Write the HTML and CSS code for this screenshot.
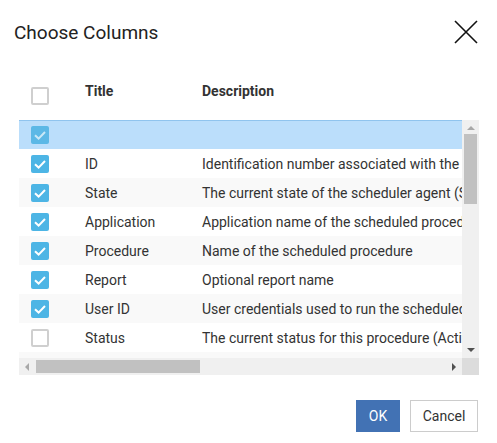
FILE: index.html
```html
<!DOCTYPE html>
<html>
<head>
<meta charset="utf-8">
<link rel="stylesheet" href="styles.css">
</head>
<body>
<div class="dialog">
  <div class="dlg-head">
    <div class="dlg-title">Choose Columns</div>
    <svg class="close" width="24" height="24" viewBox="0 0 24 24"><path d="M1 1 L23 23 M23 1 L1 23" stroke="#111" stroke-width="1.6" fill="none"/></svg>
  </div>
  <div class="grid">
    <div class="grid-head">
      <div class="cell-cb"><span class="cb"></span></div>
      <div class="hcell">Title</div>
      <div class="hcell">Description</div>
    </div>
    <div class="grid-body">
      <div class="viewport">
        <div class="rows">
          <div class="row sel"><div class="cell-cb"><span class="cb on"><svg viewBox="0 0 18 18"><path d="M4 9.2 L7.6 12.6 L14 6" /></svg></span></div><div class="c-title"></div><div class="c-desc"></div></div>
          <div class="row"><div class="cell-cb"><span class="cb on"><svg viewBox="0 0 18 18"><path d="M4 9.2 L7.6 12.6 L14 6" /></svg></span></div><div class="c-title">ID</div><div class="c-desc">Identification number associated with the scheduled procedure</div></div>
          <div class="row alt"><div class="cell-cb"><span class="cb on"><svg viewBox="0 0 18 18"><path d="M4 9.2 L7.6 12.6 L14 6" /></svg></span></div><div class="c-title">State</div><div class="c-desc">The current state of the scheduler agent (Started/Stopped)</div></div>
          <div class="row"><div class="cell-cb"><span class="cb on"><svg viewBox="0 0 18 18"><path d="M4 9.2 L7.6 12.6 L14 6" /></svg></span></div><div class="c-title">Application</div><div class="c-desc">Application name of the scheduled procedure</div></div>
          <div class="row alt"><div class="cell-cb"><span class="cb on"><svg viewBox="0 0 18 18"><path d="M4 9.2 L7.6 12.6 L14 6" /></svg></span></div><div class="c-title">Procedure</div><div class="c-desc">Name of the scheduled procedure</div></div>
          <div class="row"><div class="cell-cb"><span class="cb on"><svg viewBox="0 0 18 18"><path d="M4 9.2 L7.6 12.6 L14 6" /></svg></span></div><div class="c-title">Report</div><div class="c-desc">Optional report name</div></div>
          <div class="row alt"><div class="cell-cb"><span class="cb on"><svg viewBox="0 0 18 18"><path d="M4 9.2 L7.6 12.6 L14 6" /></svg></span></div><div class="c-title">User ID</div><div class="c-desc">User credentials used to run the scheduled procedure</div></div>
          <div class="row"><div class="cell-cb"><span class="cb"></span></div><div class="c-title">Status</div><div class="c-desc">The current status for this procedure (Active/Inactive)</div></div>
          <div class="row alt"><div class="cell-cb"><span class="cb"></span></div><div class="c-title">Start Time</div><div class="c-desc">Time at which the procedure starts</div></div>
        </div>
      </div>
      <div class="vscroll">
        <span class="arr up"></span>
        <span class="vthumb"></span>
        <span class="arr down"></span>
      </div>
      <div class="hscroll">
        <span class="arr left"></span>
        <span class="hthumb"></span>
        <span class="arr right"></span>
      </div>
      <div class="corner"></div>
    </div>
  </div>
  <div class="footer">
    <button class="btn ok">OK</button>
    <button class="btn cancel">Cancel</button>
  </div>
</div>
</body>
</html>
```
FILE: styles.css
```css
* { box-sizing: border-box; }
html, body { margin: 0; padding: 0; background: #fff; }
body { font-family: Roboto, "Liberation Sans", sans-serif; color: #333; }
.dialog { width: 497px; height: 443px; }
.dlg-head { height: 64px; display: flex; align-items: center; justify-content: space-between; padding: 0 19px 0 14px; }
.dlg-title { font-size: 19px; color: #222; }
.close { display: block; margin-top: 0; }
.grid { margin: 8px 0 0 19px; width: 460px; }
.grid-head { height: 48px; display: grid; grid-template-columns: 54px 117px 1fr; }
.grid-head .cell-cb { align-self: center; }
.hcell { font-size: 14px; font-weight: 700; padding: 11px 0 0 12px; color: #333; }
.cell-cb { display: flex; align-items: center; padding-left: 12px; }
.cb { width: 18px; height: 18px; border: 2px solid #cfcfcf; border-radius: 2px; background: #fff; display: block; }
.cb.on { border: none; background: #4db5e5; }
.cb svg { display: block; width: 18px; height: 18px; }
.cb svg path { fill: none; stroke: #fff; stroke-width: 2; }
.grid-body { display: grid; grid-template-columns: 443px 17px; grid-template-rows: 238px 17px; }
.viewport { overflow: hidden; }
.rows { width: 1100px; }
.row { height: 29px; display: grid; grid-template-columns: 54px 117px 1fr; background: #fff; font-size: 14px; }
.row.alt { background: #f9f9f9; }
.row.sel { background: #bbdefb; border-top: 1px solid #90c4ee; }
.row.sel .cb.on { background: #5cb8e6; }
.row.sel .cb svg path { stroke: #c9e8f7; }
.c-title, .c-desc { display: flex; align-items: center; padding-left: 12px; white-space: nowrap; }
.vscroll { background: #f0f0f0; display: flex; flex-direction: column; align-items: center; }
.vthumb { width: 13px; height: 70px; background: #c1c1c1; margin-top: 4px; }
.hscroll { background: #f0f0f0; display: flex; align-items: center; }
.hthumb { width: 164px; height: 13px; background: #c1c1c1; }
.corner { background: #dcdcdc; }
.arr { width: 0; height: 0; display: block; }
.arr.up { margin-top: 6px; border-left: 4px solid transparent; border-right: 4px solid transparent; border-bottom: 4px solid #a8a8a8; }
.arr.down { margin-top: auto; margin-bottom: 6px; border-left: 4px solid transparent; border-right: 4px solid transparent; border-top: 4px solid #505050; }
.arr.left { margin-left: 6px; margin-right: 7px; border-top: 4px solid transparent; border-bottom: 4px solid transparent; border-right: 4px solid #a8a8a8; }
.arr.right { margin-left: auto; margin-right: 6px; border-top: 4px solid transparent; border-bottom: 4px solid transparent; border-left: 4px solid #505050; }
.footer { display: flex; justify-content: flex-end; gap: 10px; margin-top: 25px; padding-right: 19px; }
.btn { font-family: Roboto, "Liberation Sans", sans-serif; font-size: 14px; height: 32px; padding: 0; border-radius: 0; cursor: pointer; }
.btn.ok { width: 44px; background: #4272b4; color: #fff; border: 1px solid #4272b4; }
.btn.cancel { width: 68px; background: #fff; color: #333; border: 1px solid #ccc; }
```
